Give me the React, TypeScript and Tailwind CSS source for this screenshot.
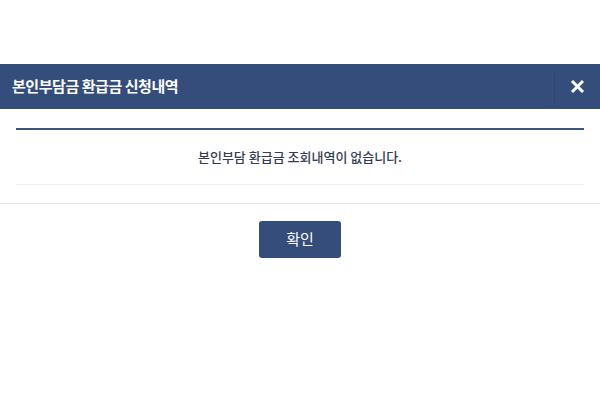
import React from 'react';

const FONT = { fontFamily: '"Noto Sans CJK KR", "Noto Sans", sans-serif' };

export default function App() {
  return (
    <div className="w-[600px] h-[400px] bg-white pt-[64px]" style={FONT}>
      {/* header */}
      <div className="h-[45px] bg-[#344d7a] flex items-center justify-between">
        <h1 className="pl-[12px] text-white text-[15px] font-bold tracking-[-0.03em]">본인부담금 환급금 신청내역</h1>
        <div className="h-full flex items-center">
          <div className="w-px h-[34px] bg-[#2d4470]" />
          <button className="w-[45px] h-full flex items-center justify-center">
            <svg width="15" height="15" viewBox="0 0 15 15">
              <path d="M2 2 L13 13 M13 2 L2 13" stroke="white" strokeWidth="3" strokeLinecap="butt" />
            </svg>
          </button>
        </div>
      </div>

      {/* body */}
      <div className="px-[16px] pt-[19px] pb-[18px] border-b border-[#e2e2e2]">
        <div className="border-t-2 border-[#3e5580]">
          <p className="h-[55px] flex items-center justify-center text-[13px] font-medium text-[#353d50] border-b border-[#eeeeee]">
            본인부담 환급금 조회내역이 없습니다.
          </p>
        </div>
      </div>

      {/* footer */}
      <div className="flex justify-center pt-[17px]">
        <button className="w-[82px] h-[37px] rounded-[3px] bg-[#344d7a] text-white text-[15px]">확인</button>
      </div>
    </div>
  );
}
